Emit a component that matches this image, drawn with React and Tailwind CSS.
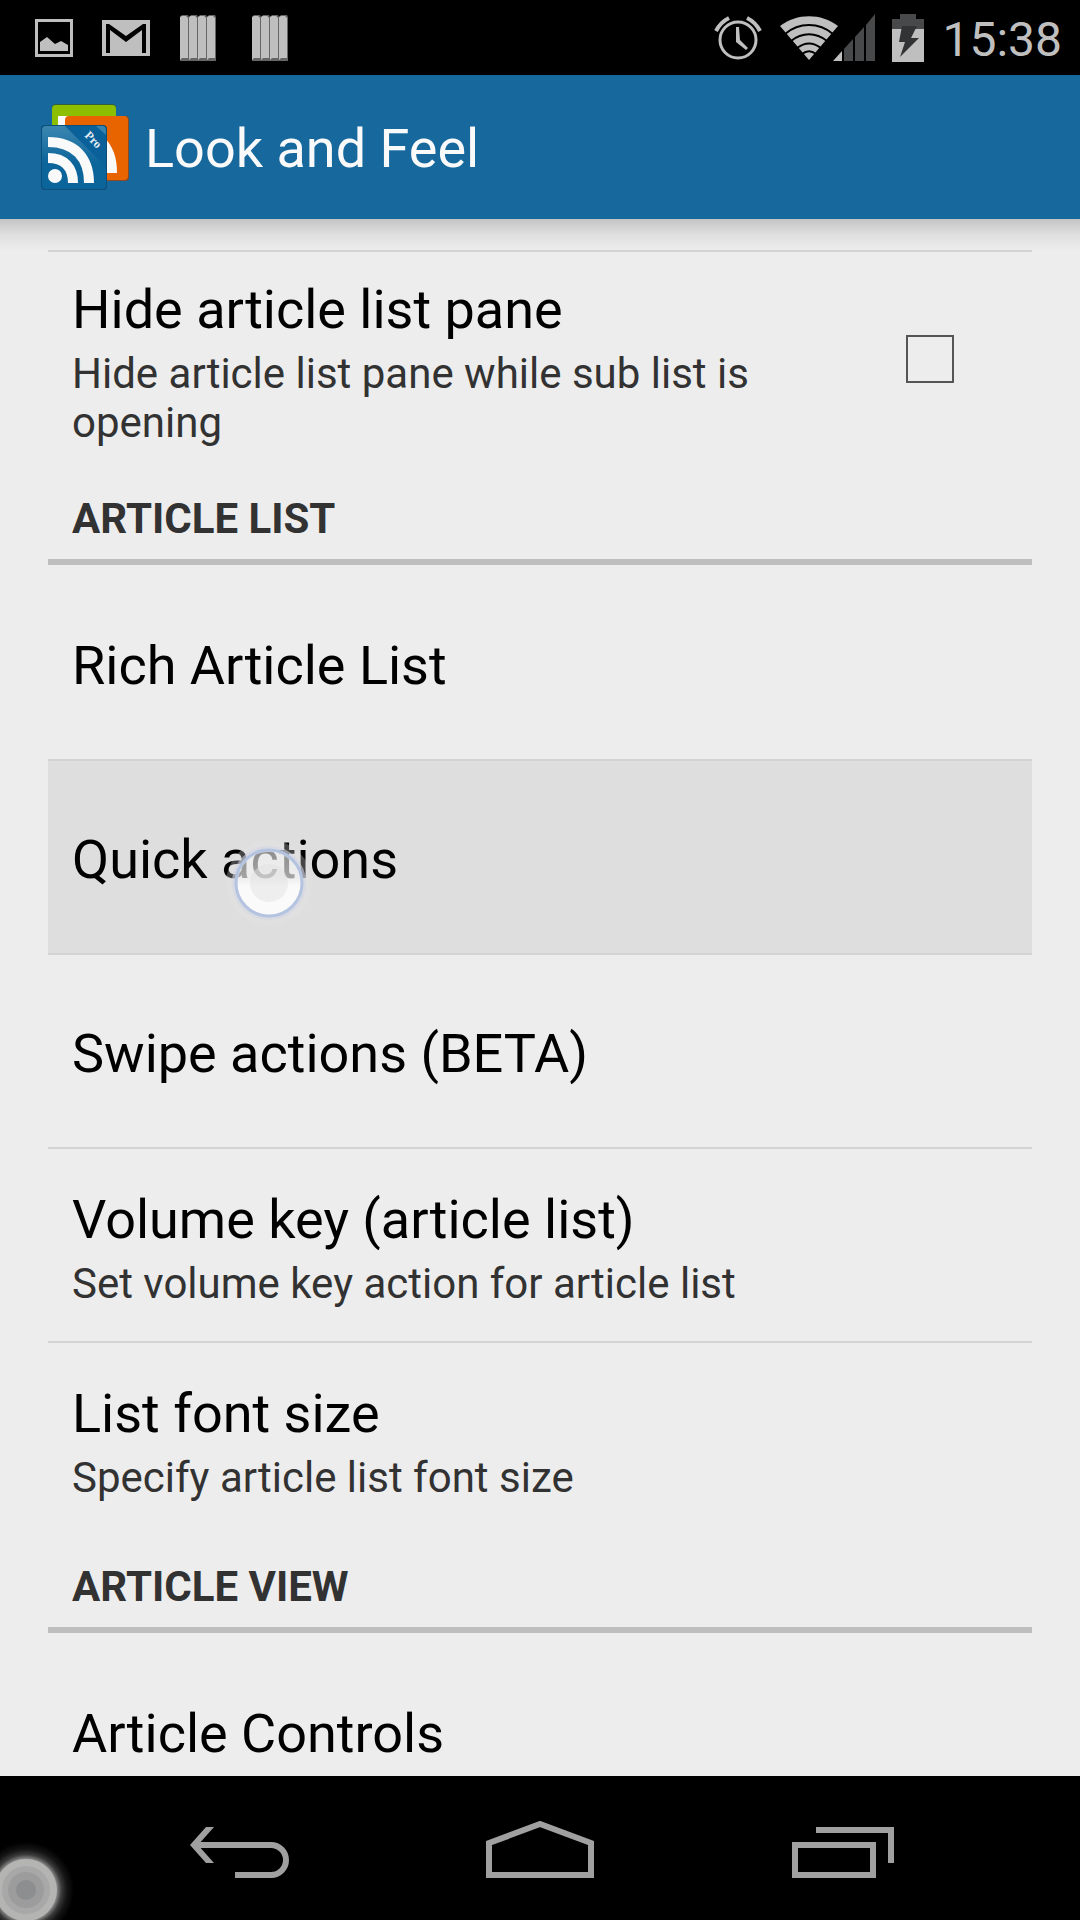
import React from "react";

function PictureIcon() {
  return (
    <svg className="h-[38px] w-[38px]" viewBox="0 0 38 38" fill="#bfbfbf" role="img" aria-label="Screenshot saved">
      <path d="M0 0H38V38H0ZM3 3V35H35V3Z" fillRule="evenodd" />
      <path d="M5 23L12 18L20 25L26 22L33 26V32H5Z" />
    </svg>
  );
}

function MailIcon() {
  return (
    <svg className="h-[36px] w-[48px]" viewBox="0 0 48 36" role="img" aria-label="New mail">
      <path d="M0 0H48V36H0Z" fill="#bfbfbf" />
      <path d="M4 33V4H7L24 16L41 4H44V33H40V10L24 22L8 10V33Z" fill="#000" />
    </svg>
  );
}

function BarsIcon() {
  return (
    <svg className="h-[46px] w-[36px]" viewBox="0 0 36 46" role="img" aria-label="Notification">
      {[0, 9, 18, 27].map((x) => (
        <g key={x}>
          <path d={`M${x} 2L${x + 2} 0H${x + 8}L${x + 9} 2V46H${x}Z`} fill="#666" />
          <path d={`M${x} 2L${x + 2} 1H${x + 6}L${x + 8} 3V43H${x + 2}L${x} 45Z`} fill="#bfbfbf" />
        </g>
      ))}
    </svg>
  );
}

function AlarmIcon() {
  return (
    <svg className="h-[44px] w-[48px]" viewBox="0 0 48 44" role="img" aria-label="Alarm set">
      <g fill="none" stroke="#bfbfbf">
        <circle cx="24" cy="24" r="18" strokeWidth="3" />
        <path d="M2 15C5 9 9 5 15 2M46 15C43 9 39 5 33 2" strokeWidth="4" />
      </g>
      <path d="M22 11H25L26 24L34 32L32 34L22 26Z" fill="#bfbfbf" />
    </svg>
  );
}

function SignalIcon() {
  return (
    <svg className="h-[48px] w-[96px]" viewBox="0 0 96 48" role="img" aria-label="Wi-Fi and mobile signal">
      <path d="M0 12C17 -1 41 -1 58 12L29 46Z" fill="#bfbfbf" />
      <g fill="none" stroke="#000" strokeWidth="2">
        <path d="M5 20C19 8 39 8 53 20" />
        <path d="M11 27C22 18 36 18 47 27" />
        <path d="M17 34C25 28 33 28 41 34" />
        <path d="M22 40C27 36 31 36 36 40" />
      </g>
      <path d="M53 47L62 37V47Z" fill="#bfbfbf" />
      <path d="M64 35L73 25V47H64ZM75 23L84 13V47H75ZM86 11L95 0V47H86Z" fill="#48494b" />
    </svg>
  );
}

function BatteryIcon() {
  return (
    <svg className="h-[48px] w-[32px]" viewBox="0 0 32 48" role="img" aria-label="Battery charging">
      <path d="M8 0H24V5H32V15H0V5H8Z" fill="#48494b" />
      <path d="M0 15H32V48H0Z" fill="#bfbfbf" />
      <path d="M10 12H25L19 24H27L8 43L13 28H7Z" fill="#323335" />
    </svg>
  );
}

function StatusBar() {
  return (
    <header className="flex h-[75px] shrink-0 items-center bg-black pl-[35px] pr-[18px]">
      <div className="flex items-center">
        <PictureIcon />
        <div className="ml-[29px] flex"><MailIcon /></div>
        <div className="ml-[30px] flex gap-9">
          <BarsIcon />
          <BarsIcon />
        </div>
      </div>
      <div className="ml-auto flex items-center">
        <AlarmIcon />
        <div className="ml-[18px] flex"><SignalIcon /></div>
        <div className="ml-4 flex"><BatteryIcon /></div>
        <time className="ml-[18px] pt-1 text-[48px] leading-[72px] text-[#bfbfbf]">15:38</time>
      </div>
    </header>
  );
}

function AppLogo() {
  return (
    <svg className="h-[86px] w-[88px]" viewBox="0 0 88 86" aria-hidden="true">
      <defs>
        <linearGradient id="tile" x1="0" y1="0" x2="0" y2="1">
          <stop offset="0" stopColor="#3b86b0" />
          <stop offset="0.6" stopColor="#0b649a" />
        </linearGradient>
      </defs>
      <rect x="11" y="0" width="64" height="60" rx="4" fill="#35603c" />
      <rect x="11" y="1" width="64" height="60" rx="4" fill="#8bbf00" />
      <path d="M17 12H30V40H17Z" fill="#fafafa" />
      <rect x="25" y="12" width="63" height="65" rx="4" fill="#8a4a22" />
      <rect x="24" y="12" width="63" height="64" rx="4" fill="#e86400" />
      <path d="M62 32C72 42 76 53 76 69H62Z" fill="#fafafa" />
      <rect x="0" y="21" width="66" height="65" rx="4" fill="#0e4f7a" />
      <rect x="1" y="22" width="64" height="63" rx="4" fill="url(#tile)" />
      <path d="M24 22H55L65 31V63Z" fill="#0a6099" />
      <g fill="none" stroke="#fafafa" strokeWidth="10">
        <path d="M7 38C34 38 48 54 48 79" />
        <path d="M7 54C24 54 32 64 32 79" />
      </g>
      <circle cx="14" cy="72" r="7" fill="#fafafa" />
      <text x="43" y="32" transform="rotate(45 43 32)" fill="#e5eef4" fontSize="12" fontWeight="700" fontFamily="Liberation Serif, serif">Pro</text>
    </svg>
  );
}

function SectionHeader({ children }) {
  return (
    <h2 className="mb-0.5 border-b-[6px] border-[#bebebe] px-6 pb-[15px] pt-[25px] text-[42px] font-bold leading-[50px] text-[#323232]">
      {children}
    </h2>
  );
}

function Title({ children }) {
  return <span className="block text-[54px] leading-[64px] text-black">{children}</span>;
}

function Summary({ children }) {
  return <span className="mt-[7px] block text-[42px] leading-[49px] text-[#323232]">{children}</span>;
}

function Row({ title, summary, pressed = false, last = false, children }) {
  return (
    <button
      type="button"
      className={`relative flex h-[194px] w-full flex-col justify-center border-b-2 px-6 pt-1.5 text-left ${last ? "border-transparent" : "border-[#d3d3d3]"} ${pressed ? "bg-[#dedede]" : ""}`}
    >
      <Title>{title}</Title>
      {summary && <Summary>{summary}</Summary>}
      {children}
    </button>
  );
}

function TouchDot() {
  return (
    <svg className="absolute left-[176px] top-[77px] h-[90px] w-[90px]" viewBox="0 0 90 90" aria-hidden="true">
      <defs>
        <linearGradient id="veil" x1="0" y1="0" x2="0" y2="1">
          <stop offset="0" stopColor="#fafafa" stopOpacity="0.4" />
          <stop offset="0.42" stopColor="#fafafa" stopOpacity="0.52" />
          <stop offset="0.55" stopColor="#fafafa" />
        </linearGradient>
      </defs>
      <circle cx="45" cy="45" r="43" fill="#e6e6e6" opacity="0.3" />
      <circle cx="45" cy="45" r="34" fill="none" stroke="#d0d6e2" strokeWidth="6" opacity="0.6" />
      <circle cx="45" cy="45" r="33" fill="url(#veil)" stroke="#b4c4e0" strokeWidth="3" />
      <circle cx="45" cy="45" r="19" fill="#e2e2e2" opacity="0.5" />
    </svg>
  );
}

function NavBar() {
  return (
    <nav className="relative flex h-[144px] shrink-0 items-center justify-center gap-[42px] overflow-hidden bg-black pt-1.5">
      <button type="button" aria-label="Back" className="flex h-full w-[258px] items-center justify-center">
        <svg className="h-[60px] w-[108px]" viewBox="0 0 108 60">
          <path d="M10 24H85A15 15 0 0 1 85 54H49" fill="none" stroke="#a0a0a0" strokeWidth="6" />
          <path d="M4 24L20 6H28L12 24L28 42H20Z" fill="#a0a0a0" />
        </svg>
      </button>
      <button type="button" aria-label="Home" className="flex h-full w-[258px] items-center justify-center">
        <svg className="h-[60px] w-[108px]" viewBox="0 0 108 60" fill="none" stroke="#a0a0a0" strokeWidth="6">
          <path d="M3 54V22L54 3L105 22V54Z" />
        </svg>
      </button>
      <button type="button" aria-label="Recent apps" className="flex h-full w-[258px] items-center justify-center">
        <svg className="h-[60px] w-[108px]" viewBox="0 0 108 60" fill="none" stroke="#a0a0a0" strokeWidth="6">
          <path d="M9 24H87V54H9ZM30 9H105V42" />
        </svg>
      </button>
      <svg className="absolute bottom-0 left-0 h-[78px] w-[80px]" viewBox="0 0 80 78" aria-hidden="true">
        <defs>
          <radialGradient id="halo" gradientUnits="userSpaceOnUse" cx="26" cy="48" r="48">
            <stop offset="0.64" stopColor="#8c8c8c" />
            <stop offset="0.74" stopColor="#3a3a3a" />
            <stop offset="0.85" stopColor="#151515" />
            <stop offset="1" stopColor="#000" />
          </radialGradient>
        </defs>
        <circle cx="26" cy="48" r="48" fill="url(#halo)" />
        <circle cx="26" cy="48" r="31" fill="#b4b4b3" />
        <circle cx="26" cy="48" r="24" fill="#a8a8a8" />
        <circle cx="26" cy="48" r="18" fill="#9c9c9c" />
        <circle cx="26" cy="48" r="10" fill="#8c8e90" />
      </svg>
    </nav>
  );
}

export default function App() {
  return (
    <div className="flex h-screen flex-col overflow-hidden bg-[#ededed] font-[Roboto,sans-serif]">
      <StatusBar />
      <div className="flex h-[144px] shrink-0 items-center bg-[#16689d] pl-[41px]">
        <AppLogo />
        <h1 className="ml-4 pt-1 text-[54px] leading-[64px] text-[#fafafa]">Look and Feel</h1>
      </div>
      <main className="relative min-h-0 flex-1 overflow-hidden px-12 pt-[31px]">
        <div className="absolute inset-x-0 top-0 h-8 bg-linear-to-b from-[#c4c4c4] via-[#e0e0e0] to-[#ededed]" />
        <label className="relative mb-1 flex items-center border-t-2 border-[#d3d3d3] px-6">
          <span className="flex-1 pb-[18px] pr-12 pt-[26px]">
            <Title>Hide article list pane</Title>
            <Summary>Hide article list pane while sub list is opening</Summary>
          </span>
          <input type="checkbox" className="mr-[54px] h-12 w-12 appearance-none border-2 border-[#555]" />
        </label>
        <SectionHeader>ARTICLE LIST</SectionHeader>
        <Row title="Rich Article List" />
        <Row title="Quick actions" pressed>
          <TouchDot />
        </Row>
        <Row title="Swipe actions (BETA)" />
        <Row title="Volume key (article list)" summary="Set volume key action for article list" />
        <Row title="List font size" summary="Specify article list font size" last />
        <SectionHeader>ARTICLE VIEW</SectionHeader>
        <Row title="Article Controls" />
      </main>
      <NavBar />
    </div>
  );
}
